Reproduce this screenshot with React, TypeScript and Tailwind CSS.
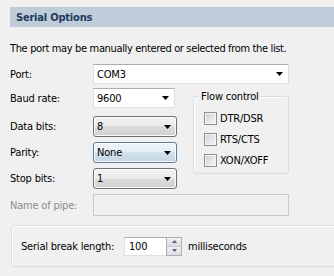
import React from "react";

const font = { fontFamily: '"DejaVu Sans Condensed", "Liberation Sans", Arial, sans-serif' };

function Arrow() {
  return (
    <svg width="7" height="4" viewBox="0 0 7 4" className="block">
      <polygon points="0,0 7,0 3.5,4" fill="#000" />
    </svg>
  );
}

function TextCombo({ value, width }: { value: string; width: string }) {
  return (
    <div
      className={`${width} h-[20px] bg-white border border-[#dbdfe6] border-t-[#abadb3] flex items-center justify-between pl-[3px] pr-[5px]`}
    >
      <span>{value}</span>
      <Arrow />
    </div>
  );
}

function ListCombo({ value, hot }: { value: string; hot?: boolean }) {
  return (
    <div
      className={
        hot
          ? "w-[84px] h-[21px] rounded-[3px] border border-[#5c7e9c] bg-[linear-gradient(#eef5fa_0%,#e3eef6_50%,#d2e1ec_50%,#c5d7e4_100%)] flex items-center justify-between pl-[3px] pr-[5px] shadow-[inset_0_0_0_1px_#fcfcfc]"
          : "w-[84px] h-[21px] rounded-[3px] border border-[#707070] bg-[linear-gradient(#f2f2f2_0%,#ebebeb_50%,#dddddd_50%,#cfcfcf_100%)] flex items-center justify-between pl-[3px] pr-[5px] shadow-[inset_0_0_0_1px_#fcfcfc]"
      }
    >
      <span>{value}</span>
      <Arrow />
    </div>
  );
}

function Check({ label }: { label: string }) {
  return (
    <div className="flex items-center h-[13px]">
      <div className="w-[13px] h-[13px] border border-[#8e8f8f] bg-[linear-gradient(135deg,#cbcfd5,#f7f7f7)] shadow-[inset_0_0_0_1px_#f4f4f4]" />
      <span className="ml-[3px]">{label}</span>
    </div>
  );
}

export default function App() {
  return (
    <div
      className="w-[334px] h-[276px] overflow-hidden bg-[#f0f0f0] text-[11px] tracking-[-0.2px] text-black leading-none relative"
      style={font}
    >
      <div className="ml-[10px] mt-[7px] h-[20px] bg-[#bfcddb] flex items-center pl-[6px]">
        <span className="font-bold text-[#1e395b]">Serial Options</span>
      </div>

      <div className="ml-[10px] mt-[15px] h-[12px] flex items-center whitespace-nowrap tracking-[-0.35px]">
        The port may be manually entered or selected from the list.
      </div>

      <div className="ml-[10px] mt-[10px] flex items-center h-[20px]">
        <span className="w-[83px]">Port:</span>
        <TextCombo value="COM3" width="w-[196px]" />
      </div>

      <div className="ml-[10px] mt-[4px] flex">
        <div className="flex flex-col">
          <div className="flex items-center h-[20px]">
            <span className="w-[83px]">Baud rate:</span>
            <TextCombo value="9600" width="w-[82px]" />
          </div>
          <div className="flex items-center h-[21px] mt-[8px]">
            <span className="w-[83px]">Data bits:</span>
            <ListCombo value="8" />
          </div>
          <div className="flex items-center h-[21px] mt-[5px]">
            <span className="w-[83px]">Parity:</span>
            <ListCombo value="None" hot />
          </div>
          <div className="flex items-center h-[21px] mt-[5px]">
            <span className="w-[83px]">Stop bits:</span>
            <ListCombo value="1" />
          </div>
        </div>

        <div className="relative ml-[16px] mt-[8px] w-[96px] h-[78px] rounded-[3px] border border-[#d5dfe5] shadow-[inset_1px_1px_0_#fff] flex flex-col gap-[8px] pl-[10px] pt-[15px]">
          <span className="absolute left-[5px] top-[-7px] bg-[#f0f0f0] px-[2px] h-[13px] flex items-center whitespace-nowrap">
            Flow control
          </span>
          <Check label="DTR/DSR" />
          <Check label="RTS/CTS" />
          <Check label="XON/XOFF" />
        </div>
      </div>

      <div className="ml-[10px] mt-[5px] flex items-center h-[22px]">
        <span className="w-[83px] text-[#8d8d8d]">Name of pipe:</span>
        <div className="w-[196px] h-[22px] border border-[#c9c9c9] bg-[#f0f0f0]" />
      </div>

      <div className="ml-[11px] mt-[9px] w-[340px] h-[42px] rounded-[3px] border border-[#d5dfe5] shadow-[inset_1px_1px_0_#fff] flex items-center pl-[9px]">
        <span className="w-[103px] whitespace-nowrap">Serial break length:</span>
        <div className="flex h-[19px]">
          <div className="w-[42px] h-[19px] bg-white border border-[#dbdfe6] border-t-[#abadb3] border-r-0 flex items-center pl-[4px]">
            100
          </div>
          <div className="w-[16px] h-[19px] flex flex-col border border-[#abadb3] bg-white">
            <div className="flex-1 flex items-center justify-center border-b border-[#c2c8d2] bg-[linear-gradient(#f2f2f2,#dcdcdc)]">
              <svg width="5" height="3" viewBox="0 0 5 3">
                <polygon points="0,3 5,3 2.5,0" fill="#4d6185" />
              </svg>
            </div>
            <div className="flex-1 flex items-center justify-center bg-[linear-gradient(#f2f2f2,#dcdcdc)]">
              <svg width="5" height="3" viewBox="0 0 5 3">
                <polygon points="0,0 5,0 2.5,3" fill="#4d6185" />
              </svg>
            </div>
          </div>
        </div>
        <span className="ml-[6px] whitespace-nowrap">milliseconds</span>
      </div>
    </div>
  );
}
